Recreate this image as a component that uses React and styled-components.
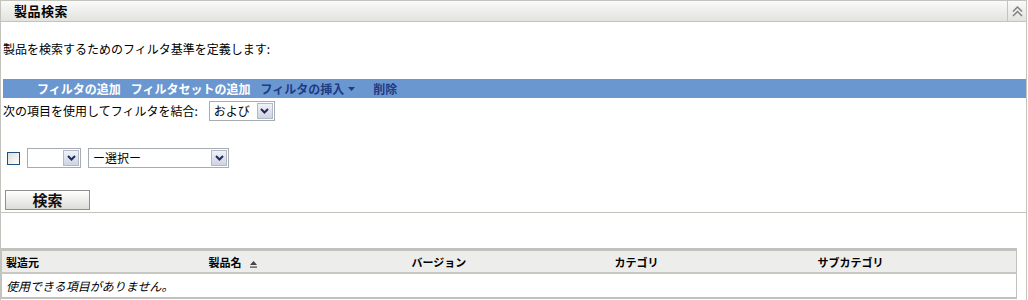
import React from "react";
import styled, { createGlobalStyle } from "styled-components";

const Global = createGlobalStyle`
  html, body { margin: 0; padding: 0; background: #fff; }
  body { font-family: "Noto Sans CJK JP", "Noto Sans", sans-serif; font-size: 12px; color: #000; }
`;

const Frame = styled.div`
  width: 1025px;
  min-height: 300px;
  border-left: 1px solid #c4c4be;
  border-right: 1px solid #c4c4be;
`;

const Panel = styled.section`
  border-bottom: 1px solid #c4c4be;
`;

const PanelHeader = styled.div`
  display: flex;
  align-items: stretch;
  height: 20px;
  border-top: 1px solid #c4c4be;
  border-bottom: 1px solid #c4c4be;
  background: linear-gradient(#fafaf9, #e2e2de);
`;

const PanelTitle = styled.h2`
  flex: 1;
  margin: 0;
  padding-left: 13px;
  font-size: 13px;
  font-weight: bold;
  line-height: 20px;
  letter-spacing: 0.5px;
`;

const CollapseButton = styled.button`
  width: 19px;
  padding: 0;
  border: none;
  border-left: 1px solid #c4c4be;
  background: transparent;
  display: flex;
  align-items: center;
  justify-content: center;
`;

const PanelBody = styled.div`
  padding: 20px 0 2px 0;
`;

const Intro = styled.p`
  margin: 0 0 0 2px;
  line-height: 14px;
  font-size: 12px;
`;

const Toolbar = styled.div`
  display: flex;
  align-items: center;
  gap: 10px;
  height: 19px;
  margin: 23px 0 0 2px;
  padding-left: 34px;
  background: #6b97d1;
`;

const ToolItem = styled.span`
  display: inline-flex;
  align-items: center;
  gap: 4px;
  margin-left: ${(p) => p.$shift || 0}px;
  font-size: 12px;
  font-weight: bold;
  line-height: 19px;
  color: ${(p) => (p.$dark ? "#1e3b86" : "#ffffff")};
`;

const Row = styled.div`
  display: flex;
  align-items: center;
  gap: ${(p) => p.$gap || 6}px;
  margin: ${(p) => p.$margin || "0"};
  padding-left: ${(p) => p.$pad || 2}px;
`;

const Label = styled.span`
  font-size: 12px;
  line-height: 14px;
`;

const SelectBox = styled.div`
  box-sizing: border-box;
  display: flex;
  align-items: center;
  width: ${(p) => p.$w}px;
  height: 20px;
  margin-left: ${(p) => p.$shift || 0}px;
  border: 1px solid #a5acb2;
  background: #fff;
  padding: 1px;
`;

const SelectText = styled.span`
  flex: 1;
  padding-left: 3px;
  font-size: 12px;
  line-height: 16px;
  white-space: nowrap;
`;

const SelectArrow = styled.span`
  box-sizing: border-box;
  width: 16px;
  height: 16px;
  border: 1px solid #b2b8c6;
  background: linear-gradient(#f0f2f8, #cfd3e2);
  display: flex;
  align-items: center;
  justify-content: center;
`;

const Check = styled.span`
  box-sizing: border-box;
  width: 13px;
  height: 13px;
  border: 1px solid #1c5180;
  background: linear-gradient(135deg, #dcdcd6, #ffffff);
`;

const SearchButton = styled.button`
  box-sizing: border-box;
  width: 85px;
  height: 20px;
  margin: 22px 0 0 4px;
  padding: 0;
  border: 1px solid #8e8f8f;
  background: linear-gradient(#ffffff, #dcdcd8);
  font-family: inherit;
  font-size: 15px;
  font-weight: bold;
  line-height: 18px;
  color: #111;
  display: block;
`;

const Table = styled.table`
  width: 1016px;
  margin-top: 35px;
  border-collapse: collapse;
  table-layout: fixed;
  border-top: 3px solid #c2c2bc;
  border-left: 1px solid #c2c2bc;
  border-right: 1px solid #c2c2bc;
  border-bottom: 2px solid #c2c2bc;
`;

const Th = styled.th`
  height: 21px;
  padding: 0 0 0 4px;
  text-align: left;
  font-size: 11px;
  font-weight: bold;
  background: #ededeb;
  border-bottom: 2px solid #c8c8c2;
  white-space: nowrap;
`;

const SortIcon = styled.svg`
  margin-left: 8px;
  vertical-align: -1px;
`;

const Td = styled.td`
  height: 23px;
  padding: 0 0 0 4px;
  font-size: 12px;
  font-style: italic;
`;

const Arrow = () => (
  <svg width="9" height="6" viewBox="0 0 9 6">
    <path d="M1 1 L4.5 4.5 L8 1" fill="none" stroke="#1d2c5c" strokeWidth="2" />
  </svg>
);

const Select = ({ w, shift, children }) => (
  <SelectBox $w={w} $shift={shift}>
    <SelectText>{children}</SelectText>
    <SelectArrow>
      <Arrow />
    </SelectArrow>
  </SelectBox>
);

export default function App() {
  return (
    <>
      <Global />
      <Frame>
        <Panel>
          <PanelHeader>
            <PanelTitle>製品検索</PanelTitle>
            <CollapseButton aria-label="collapse">
              <svg width="11" height="11" viewBox="0 0 11 11">
                <path d="M1 5.5 L5.5 1 L10 5.5 M1 10 L5.5 5.5 L10 10" fill="none" stroke="#808080" strokeWidth="1.5" />
              </svg>
            </CollapseButton>
          </PanelHeader>
          <PanelBody>
            <Intro>製品を検索するためのフィルタ基準を定義します:</Intro>
            <Toolbar>
              <ToolItem>フィルタの追加</ToolItem>
              <ToolItem>フィルタセットの追加</ToolItem>
              <ToolItem $dark>
                フィルタの挿入
                <svg width="7" height="4" viewBox="0 0 7 4">
                  <path d="M0 0 H7 L3.5 4 Z" fill="#1e3b86" />
                </svg>
              </ToolItem>
              <ToolItem $dark $shift={8}>削除</ToolItem>
            </Toolbar>
            <Row $gap={11} $margin="3px 0 0 0">
              <Label>次の項目を使用してフィルタを結合:</Label>
              <Select w={66}>および</Select>
            </Row>
            <Row $gap={7} $margin="27px 0 0 0" $pad={6}>
              <Check />
              <Select w={54}></Select>
              <Select w={141}>ー選択ー</Select>
            </Row>
            <SearchButton>検索</SearchButton>
          </PanelBody>
        </Panel>
        <Table>
          <thead>
            <tr>
              <Th>製造元</Th>
              <Th>
                製品名
                <SortIcon width="7" height="7" viewBox="0 0 7 7">
                  <path d="M3.5 0 L7 4 H0 Z" fill="#444" />
                  <rect x="0" y="5.5" width="7" height="1.2" fill="#444" />
                </SortIcon>
              </Th>
              <Th>バージョン</Th>
              <Th>カテゴリ</Th>
              <Th>サブカテゴリ</Th>
            </tr>
          </thead>
          <tbody>
            <tr>
              <Td colSpan={5}>使用できる項目がありません。</Td>
            </tr>
          </tbody>
        </Table>
      </Frame>
    </>
  );
}
